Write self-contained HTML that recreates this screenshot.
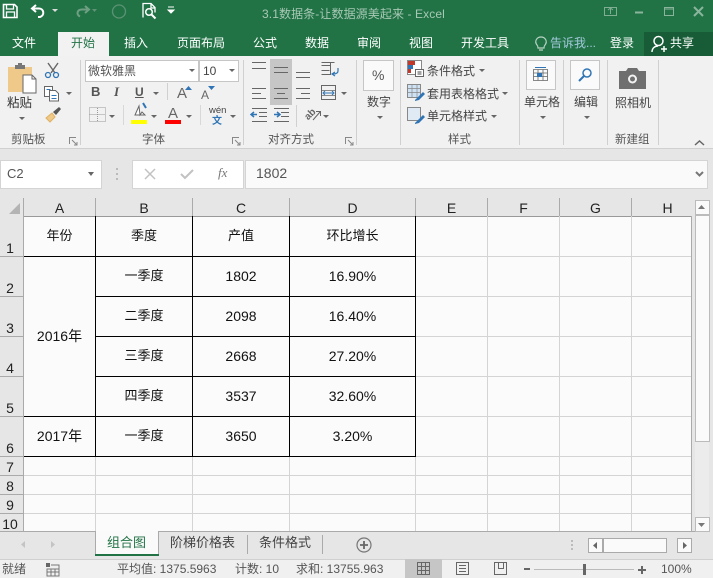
<!DOCTYPE html>
<html lang="zh"><head><meta charset="utf-8"><style>
html,body{margin:0;padding:0}
body{width:713px;height:578px;overflow:hidden;position:relative;background:#e6e6e6;font-family:"Liberation Sans","Noto Sans CJK SC",sans-serif;font-size:12px;color:#444}
div,span,svg{position:absolute}
.t{white-space:nowrap;line-height:16px}
.tab{color:#fff;top:35px;font-size:12px;white-space:nowrap;line-height:16px}
.a{width:0;height:0;border-left:3px solid transparent;border-right:3px solid transparent;border-top:3px solid #666}
.sep{width:1px;background:#d0d0d0;top:60px;height:85px}
.gl{background:#d4d4d4}
.v{top:216px;width:1px;height:315px}
.h{left:24px;width:667px;height:1px}
.b{background:#000}
.c{color:#111;font-size:13px;text-align:center;line-height:18px;white-space:nowrap}
.n{font-size:14px}
.ch{top:200px;color:#222;font-size:14px;text-align:center;line-height:17px}
.rh{left:0;width:20px;text-align:center;color:#222;font-size:14px;line-height:16px}
.hs{top:198px;width:1px;height:18px;background:#aaa}
.rs{left:0;width:23px;height:1px;background:#aaa}
svg{overflow:visible}
</style></head><body>
<div style="left:0;top:0;width:713px;height:56px;background:#217346"></div>
<div style="left:58px;top:32px;width:51px;height:24px;background:#f2f2f2"></div>
<div style="left:644px;top:32px;width:69px;height:24px;background:#185c37"></div>
<svg style="left:0;top:0" width="713" height="32" fill="none">
<path d="M3.500 4.500h11l2.500 2.500v10.500h-13.500z" stroke="#fff" stroke-width="1.600"/><path d="M6.500 5v4h7v-4M6.500 17v-5h8v5" stroke="#fff" stroke-width="1.300"/>
<path d="M36 5l-4 3.500 4 3.500" stroke="#fff" stroke-width="2"/><path d="M33 8.500h6c5 0 6 7 1 8.500h-2" stroke="#fff" stroke-width="2"/>
<path d="M52 9h6l-3 3z" fill="#ddd"/>
<path d="M85 6l4 3.500-4 3.500" stroke="#6f9f83" stroke-width="2"/><path d="M88 9.500h-6c-5 0-6 5-2 7" stroke="#6f9f83" stroke-width="2"/>
<path d="M92 9h5l-2.500 3z" fill="#5f9376"/>
<circle cx="119" cy="11.500" r="6.500" stroke="#5b9273" stroke-width="1.300"/>
<path d="M143 17.500v-14h8l4 4v5M151 4v4h4" stroke="#fff" stroke-width="1.300"/><circle cx="149" cy="12" r="3.300" stroke="#fff" stroke-width="1.500"/><path d="M151.500 14.500l4 4" stroke="#fff" stroke-width="2"/>
<path d="M168 7h6M168 10h6l-3 3z" stroke="#fff" fill="#fff"/>
<rect x="604.500" y="7.500" width="12" height="8" stroke="#7fae93"/><path d="M610.500 8v6M608 10l2.500-2 2.500 2" stroke="#7fae93"/>
<path d="M635 12.500h8" stroke="#8ab59c" stroke-width="2"/>
<rect x="664.500" y="7.500" width="9" height="8" stroke="#8ab59c"/><path d="M665 9h8" stroke="#8ab59c"/>
<path d="M694 7l9 9M703 7l-9 9" stroke="#8ab59c" stroke-width="2"/>
</svg>
<div class="t" style="left:262px;top:6px;color:#a8c8b5;font-size:12px;letter-spacing:.1px">3.1数据条-让数据源美起来 - Excel</div>
<div class="tab" style="left:12px">文件</div>
<div class="tab" style="left:71px;color:#217346">开始</div>
<div class="tab" style="left:124px">插入</div>
<div class="tab" style="left:177px">页面布局</div>
<div class="tab" style="left:253px">公式</div>
<div class="tab" style="left:305px">数据</div>
<div class="tab" style="left:357px">审阅</div>
<div class="tab" style="left:409px">视图</div>
<div class="tab" style="left:461px">开发工具</div>
<svg style="left:533px;top:35px" width="16" height="18" fill="none"><path d="M4 10c-3-4 0-8 4-8s7 4 4 8c-1 1-1 2-1 3h-6c0-1 0-2-1-3zM6 15h4" stroke="#b9d3c4" stroke-width="1.200"/></svg>
<div class="tab" style="left:550px;color:#a4c9dc">告诉我...</div>
<div class="tab" style="left:610px">登录</div>
<svg style="left:651px;top:35px" width="18" height="18" fill="none"><circle cx="7.500" cy="6" r="4.500" stroke="#fff" stroke-width="1.500"/><path d="M1 17c0-4 3-6 6-6M10 14h6M13 11v6" stroke="#fff" stroke-width="1.500"/></svg>
<div class="tab" style="left:670px">共享</div>

<div style="left:0;top:56px;width:713px;height:92px;background:#f1f1f1"></div>
<div style="left:0;top:148px;width:713px;height:1px;background:#d0d0d0"></div>
<div class="sep" style="left:80px"></div><div class="sep" style="left:243px"></div><div class="sep" style="left:356px"></div><div class="sep" style="left:400px"></div><div class="sep" style="left:519px"></div><div class="sep" style="left:563px"></div><div class="sep" style="left:607px"></div><div class="sep" style="left:658px"></div>

<svg style="left:0;top:56px" width="713" height="92" fill="none">
<path d="M8 11h24v25H8z" fill="#eec98a"/><rect x="15" y="9" width="10" height="4" fill="#777"/><rect x="18" y="7" width="4" height="3" fill="#777"/>
<path d="M23 19h9l4 4v14H23z" fill="#fff" stroke="#666"/><path d="M32 19v4h4" stroke="#666"/>
<path d="M48 7l7 10M58 7l-7 10" stroke="#666" stroke-width="1.400"/><circle cx="48" cy="19" r="2.500" stroke="#2f75b5" stroke-width="1.300"/><circle cx="56" cy="19" r="2.500" stroke="#2f75b5" stroke-width="1.300"/>
<path d="M44.500 30.500h8v10h-8z" fill="#fff" stroke="#666"/><path d="M49.500 34.500h6l3 3v7.500h-9z" fill="#fff" stroke="#666"/><path d="M51.500 39.500h5M51.500 42.500h5M46.500 33.500h4" stroke="#2f75b5"/>
<path d="M46 62l6-5 3 4-5 5z" fill="#eec98a" stroke="#e0b060"/><path d="M53 56l6-5 2 2-5 6z" fill="#555"/>
<path d="M89.500 51.500h16v14h-16zM89.500 58.500h16M97.500 52v14" stroke="#999" stroke-dasharray="1 1"/>
<path d="M139 50l-4 9h10l-3-3-2 3z" stroke="#666" fill="#fff"/><path d="M143 47l3 5" stroke="#2f75b5" stroke-width="2"/><rect x="131" y="64" width="16" height="4" fill="#ff0"/>
<rect x="165" y="64" width="16" height="4" fill="#f00"/>
</svg>
<div class="t" style="left:7px;top:95px;color:#333;font-size:12.500px">粘贴</div>
<div class="a" style="left:19px;top:117px"></div>
<div class="a" style="left:66px;top:92px"></div>
<div class="t" style="left:11px;top:132px;font-size:11.500px;color:#555">剪贴板</div>
<svg style="left:69px;top:137px" width="9" height="9" fill="none"><path d="M.5 7V.5H7M3 3l5 5M8 5v3H5" stroke="#888"/></svg>

<div style="left:85px;top:60px;width:112px;height:20px;background:#fff;border:1px solid #c6c6c6"></div>
<div style="left:199px;top:60px;width:38px;height:20px;background:#fff;border:1px solid #c6c6c6"></div>
<div class="t" style="left:88px;top:63px;font-size:12px;color:#555">微软雅黑</div>
<div class="a" style="left:189px;top:69px"></div>
<div class="t" style="left:203px;top:63px;font-size:12px;color:#444">10</div>
<div class="a" style="left:229px;top:69px"></div>
<div class="t" style="left:91px;top:84px;font-weight:bold;font-size:13px;color:#555">B</div>
<div class="t" style="left:114px;top:84px;font-style:italic;font-family:'Liberation Serif',serif;font-weight:bold;font-size:13px;color:#555">I</div>
<div class="t" style="left:135px;top:84px;font-weight:bold;font-size:12px;color:#555;text-decoration:underline">U</div>
<div class="a" style="left:153px;top:92px"></div>
<div style="left:167px;top:83px;width:1px;height:17px;background:#d0d0d0"></div>
<div class="t" style="left:177px;top:86px;font-size:15px;color:#666">A</div>
<svg style="left:185px;top:86px" width="8" height="5"><path d="M0 4l3.500-4 3.500 4z" fill="#2f75b5"/></svg>
<div class="t" style="left:201px;top:87px;font-size:12px;color:#666">A</div>
<svg style="left:208px;top:86px" width="8" height="5"><path d="M0 0l3.500 4 3.500-4z" fill="#2f75b5"/></svg>
<div class="a" style="left:109px;top:115px"></div>
<div class="a" style="left:151px;top:115px"></div>
<div class="t" style="left:168px;top:106px;font-size:15px;color:#666">A</div>
<div class="a" style="left:186px;top:115px"></div>
<div style="left:123px;top:105px;width:1px;height:20px;background:#d8d8d8"></div>
<div style="left:200px;top:105px;width:1px;height:20px;background:#d8d8d8"></div>
<div class="t" style="left:209px;top:103px;font-size:9.500px;color:#444">wén</div>
<div class="t" style="left:212px;top:114px;font-size:10px;font-weight:bold;color:#2f75b5">文</div>
<div class="a" style="left:230px;top:115px"></div>
<div class="t" style="left:142px;top:132px;font-size:11.500px;color:#555">字体</div>
<svg style="left:232px;top:137px" width="9" height="9" fill="none"><path d="M.5 7V.5H7M3 3l5 5M8 5v3H5" stroke="#888"/></svg>

<div style="left:270px;top:59px;width:22px;height:46px;background:#c6c6c6"></div>
<svg style="left:240px;top:56px" width="60" height="70" fill="none" stroke="#666">
<path d="M12 6.500h14M12 12.500h14"/>
<path d="M34 11.500h14M34 16.500h14"/>
<path d="M56 16.500h14M56 21.500h14"/>
<path d="M12 32.500h14M12 37.500h9M12 42.500h14"/>
<path d="M34 32.500h14M37 37.500h8M34 42.500h14"/>
<path d="M56 32.500h14M61 37.500h9M56 42.500h14"/>
<path d="M19 56.500h8M19 60.500h8M12 52.500h15M12 65.500h15"/>
<path d="M41 56.500h8M41 60.500h8M34 52.500h15M34 65.500h15"/>
<path d="M17 58.500h-5M14 56l-3 2.500 3 2.500M34 58.500h5M37 56l3 2.500-3 2.500" stroke="#2f75b5" stroke-width="1.500"/>
</svg>
<svg style="left:316px;top:60px" width="30" height="60" fill="none" stroke="#666">
<path d="M5.500 2.500h13M5.500 5.500h9M5.500 10.500h8M5.500 14.500h9v-12"/><path d="M22 8v3c0 2-2 3-5 3M19 12l-3 2 3 2" stroke="#2f75b5" stroke-width="1.200"/>
<rect x="5.500" y="25.500" width="14" height="14"/><path d="M6 30.500h13M6 35.500h13" stroke="#888"/><path d="M8 33h9M9 31l-2 2 2 2M16 31l2 2-2 2" stroke="#2f75b5"/>
</svg>
<div class="a" style="left:341px;top:92px"></div>
<span class="t" style="left:305px;top:107px;font-size:10px;font-weight:bold;color:#666;transform:rotate(-45deg)">ab</span>
<svg style="left:312px;top:109px" width="10" height="12" fill="none" stroke="#666"><path d="M1 11l7-8M4 2.500h4.500v4.500"/></svg>
<div class="a" style="left:323px;top:115px"></div>
<div style="left:296px;top:105px;width:1px;height:22px;background:#d0d0d0"></div>
<div class="t" style="left:268px;top:132px;font-size:11.500px;color:#555">对齐方式</div>
<svg style="left:345px;top:137px" width="9" height="9" fill="none"><path d="M.5 7V.5H7M3 3l5 5M8 5v3H5" stroke="#888"/></svg>

<div style="left:363px;top:60px;width:29px;height:29px;background:#fafafa;border:1px solid #c6c6c6"></div>
<div class="t" style="left:372px;top:67px;font-size:14px;color:#555">%</div>
<div class="t" style="left:367px;top:94px;color:#444">数字</div>
<div class="a" style="left:377px;top:116px"></div>

<svg style="left:407px;top:60px" width="20" height="66" fill="none">
<rect x=".500" y=".500" width="14" height="14" fill="#fff" stroke="#888"/><rect x="1" y="1" width="7" height="4" fill="#c0392b"/><rect x="1" y="5" width="5" height="4" fill="#2f75b5"/><rect x="1" y="9" width="3" height="4" fill="#c0392b"/><rect x="8.500" y="9.500" width="8" height="7" fill="#fff" stroke="#666"/><path d="M10.500 12h4M10.500 14h4" stroke="#444"/>
<rect x=".500" y="24.500" width="13" height="13" fill="#cfe2f3" stroke="#888"/><path d="M1 28.500h13M1 32.500h13M5 25v12M10 25v12" stroke="#888" stroke-width=".7"/><path d="M8 40l5-5 3-3 2 2-6 6-4 1z" fill="#2f75b5"/>
<rect x=".500" y="47.500" width="13" height="13" fill="#dfeaf5" stroke="#888"/><path d="M8 63l5-5 3-3 2 2-6 6-4 1z" fill="#2f75b5"/>
</svg>
<div class="t" style="left:427px;top:63px;color:#444">条件格式</div><div class="a" style="left:479px;top:69px"></div>
<div class="t" style="left:427px;top:86px;color:#444">套用表格格式</div><div class="a" style="left:502px;top:92px"></div>
<div class="t" style="left:427px;top:108px;color:#444">单元格样式</div><div class="a" style="left:491px;top:115px"></div>
<div class="t" style="left:448px;top:132px;font-size:11.500px;color:#555">样式</div>

<div style="left:526px;top:60px;width:28px;height:28px;background:#fafafa;border:1px solid #c6c6c6"></div>
<svg style="left:533px;top:66px" width="16" height="16" fill="none" stroke="#666"><path d="M.5 3.500h14v11H.5zM.5 7h14M.5 10.500h14M5 3.500v11M10 3.500v11" stroke-width=".8"/><rect x="4" y="7" width="5" height="4" fill="#2f75b5" stroke="none"/><path d="M2 1.500h11" stroke="#2f75b5"/></svg>
<div class="t" style="left:524px;top:94px;color:#444">单元格</div><div class="a" style="left:540px;top:116px"></div>

<div style="left:570px;top:60px;width:28px;height:28px;background:#fafafa;border:1px solid #c6c6c6"></div>
<svg style="left:578px;top:67px" width="16" height="16" fill="none"><circle cx="9" cy="6" r="4" stroke="#2f75b5" stroke-width="1.500"/><path d="M6 9l-5 5" stroke="#2f75b5" stroke-width="2"/></svg>
<div class="t" style="left:574px;top:94px;color:#444">编辑</div><div class="a" style="left:584px;top:116px"></div>

<svg style="left:618px;top:66px" width="30" height="24"><path d="M1 5h7l2-3h9l2 3h7v18H1z" fill="#6f6f6f"/><circle cx="14.500" cy="13" r="4.500" fill="#f2f2f2"/><circle cx="14.500" cy="13" r="2.500" fill="#6f6f6f"/></svg>
<div class="t" style="left:615px;top:95px;color:#444">照相机</div>
<div class="t" style="left:615px;top:132px;font-size:11.500px;color:#555">新建组</div>
<svg style="left:694px;top:139px" width="12" height="7" fill="none"><path d="M1 6l4.500-4 4.500 4" stroke="#666" stroke-width="1.500"/></svg>

<div style="left:0;top:160px;width:100px;height:27px;background:#fff;border:1px solid #d4d4d4"></div>
<div class="t" style="left:7px;top:166px;font-size:13px;color:#555">C2</div>
<div class="a" style="left:88px;top:172px;border-left-width:3.500px;border-right-width:3.500px;border-top-width:4px"></div>
<div style="left:116px;top:168px;width:2px;height:2px;background:#bbb;box-shadow:0 5px #bbb,0 10px #bbb"></div>
<div style="left:132px;top:160px;width:110px;height:27px;background:#fff;border:1px solid #d4d4d4"></div>
<svg style="left:144px;top:167px" width="50" height="14" fill="none"><path d="M1 2l10 10M11 2L1 12" stroke="#c2c2c2" stroke-width="1.500"/><path d="M37 7l4 4 8-8" stroke="#c2c2c2" stroke-width="2"/></svg>
<div class="t" style="left:218px;top:165px;font-family:'Liberation Serif',serif;font-style:italic;font-size:13px;color:#777">fx</div>
<div style="left:245px;top:160px;width:461px;height:27px;background:#fafafa;border:1px solid #d4d4d4"></div>
<div class="t" style="left:256px;top:165px;font-size:14px;color:#555">1802</div>
<svg style="left:695px;top:171px" width="10" height="7" fill="none"><path d="M1 1l3.500 3.500L8 1" stroke="#777" stroke-width="2"/></svg>

<div style="left:24px;top:216px;width:667px;height:315px;background:#fbfbfb"></div>
<svg style="left:9px;top:203px" width="12" height="12"><path d="M11 0v11H0z" fill="#b4b4b4"/></svg>
<div class="hs" style="left:23px"></div><div class="hs" style="left:95px"></div><div class="hs" style="left:192px"></div><div class="hs" style="left:289px"></div><div class="hs" style="left:415px"></div><div class="hs" style="left:487px"></div><div class="hs" style="left:559px"></div><div class="hs" style="left:631px"></div>
<div style="left:23px;top:216px;width:669px;height:1px;background:#999"></div>
<div class="ch" style="left:24px;width:71px">A</div><div class="ch" style="left:96px;width:96px">B</div><div class="ch" style="left:193px;width:96px">C</div><div class="ch" style="left:290px;width:125px">D</div><div class="ch" style="left:416px;width:71px">E</div><div class="ch" style="left:488px;width:71px">F</div><div class="ch" style="left:560px;width:71px">G</div><div class="ch" style="left:632px;width:71px">H</div>
<div style="left:23px;top:198px;width:1px;height:333px;background:#aaa"></div>
<div style="left:691px;top:216px;width:1px;height:315px;background:#aaa"></div>
<div class="rs" style="top:256px"></div><div class="rs" style="top:296px"></div><div class="rs" style="top:336px"></div><div class="rs" style="top:376px"></div><div class="rs" style="top:416px"></div><div class="rs" style="top:456px"></div><div class="rs" style="top:475px"></div><div class="rs" style="top:494px"></div><div class="rs" style="top:513px"></div>
<div class="rh" style="top:240px">1</div><div class="rh" style="top:280px">2</div><div class="rh" style="top:320px">3</div><div class="rh" style="top:360px">4</div><div class="rh" style="top:400px">5</div><div class="rh" style="top:440px">6</div><div class="rh" style="top:459px">7</div><div class="rh" style="top:478px">8</div><div class="rh" style="top:497px">9</div><div class="rh" style="top:516px">10</div>

<div class="gl v" style="left:487px"></div><div class="gl v" style="left:559px"></div><div class="gl v" style="left:631px"></div>
<div class="gl v" style="left:95px;top:456px;height:75px"></div><div class="gl v" style="left:192px;top:456px;height:75px"></div><div class="gl v" style="left:289px;top:456px;height:75px"></div><div class="gl v" style="left:415px;top:456px;height:75px"></div>
<div class="gl h" style="left:416px;width:275px;top:256px"></div><div class="gl h" style="left:416px;width:275px;top:296px"></div><div class="gl h" style="left:416px;width:275px;top:336px"></div><div class="gl h" style="left:416px;width:275px;top:376px"></div><div class="gl h" style="left:416px;width:275px;top:416px"></div><div class="gl h" style="left:416px;width:275px;top:456px"></div>
<div class="gl h" style="top:475px"></div><div class="gl h" style="top:494px"></div><div class="gl h" style="top:513px"></div>
<div class="b" style="left:95px;top:216px;width:1px;height:241px"></div>
<div class="b" style="left:192px;top:216px;width:1px;height:241px"></div>
<div class="b" style="left:289px;top:216px;width:1px;height:241px"></div>
<div class="b" style="left:415px;top:216px;width:1px;height:241px"></div>
<div class="b" style="left:24px;top:256px;width:392px;height:1px"></div>
<div class="b" style="left:95px;top:296px;width:321px;height:1px"></div>
<div class="b" style="left:95px;top:336px;width:321px;height:1px"></div>
<div class="b" style="left:95px;top:376px;width:321px;height:1px"></div>
<div class="b" style="left:24px;top:416px;width:392px;height:1px"></div>
<div class="b" style="left:24px;top:456px;width:392px;height:1px"></div>

<div class="c" style="left:24px;width:71px;top:227px">年份</div><div class="c" style="left:96px;width:96px;top:227px">季度</div><div class="c" style="left:193px;width:96px;top:227px">产值</div><div class="c" style="left:290px;width:125px;top:227px">环比增长</div>
<div class="c n" style="left:24px;width:71px;top:327px">2016年</div>
<div class="c" style="left:96px;width:96px;top:267px">一季度</div><div class="c n" style="left:193px;width:96px;top:267px">1802</div><div class="c n" style="left:290px;width:125px;top:267px">16.90%</div>
<div class="c" style="left:96px;width:96px;top:307px">二季度</div><div class="c n" style="left:193px;width:96px;top:307px">2098</div><div class="c n" style="left:290px;width:125px;top:307px">16.40%</div>
<div class="c" style="left:96px;width:96px;top:347px">三季度</div><div class="c n" style="left:193px;width:96px;top:347px">2668</div><div class="c n" style="left:290px;width:125px;top:347px">27.20%</div>
<div class="c" style="left:96px;width:96px;top:387px">四季度</div><div class="c n" style="left:193px;width:96px;top:387px">3537</div><div class="c n" style="left:290px;width:125px;top:387px">32.60%</div>
<div class="c n" style="left:24px;width:71px;top:427px">2017年</div><div class="c" style="left:96px;width:96px;top:427px">一季度</div><div class="c n" style="left:193px;width:96px;top:427px">3650</div><div class="c n" style="left:290px;width:125px;top:427px">3.20%</div>

<div style="left:695px;top:200px;width:14px;height:331px;background:#ececec"></div>
<div style="left:695px;top:200px;width:13px;height:13px;background:#fafafa;border:1px solid #bbb"></div>
<svg style="left:698px;top:205px" width="8" height="5"><path d="M0 4l3.500-4 3.500 4z" fill="#777"/></svg>
<div style="left:695px;top:215px;width:13px;height:225px;background:#fafafa;border:1px solid #bbb"></div>
<div style="left:695px;top:517px;width:13px;height:13px;background:#fafafa;border:1px solid #bbb"></div>
<svg style="left:698px;top:523px" width="8" height="5"><path d="M0 0l3.500 4 3.500-4z" fill="#777"/></svg>

<div style="left:0;top:531px;width:695px;height:1px;background:#aaa"></div>
<svg style="left:20px;top:541px" width="40" height="8"><path d="M5 0v7L1 3.500z" fill="#c4c4c4"/><path d="M31 0v7l4-3.500z" fill="#c4c4c4"/></svg>
<div style="left:95px;top:531px;width:64px;height:25px;background:#fafafa;border-left:1px solid #aaa;border-right:1px solid #aaa;box-sizing:border-box"></div>
<div style="left:95px;top:554px;width:64px;height:2px;background:#217346"></div>
<div class="t" style="left:107px;top:535px;font-size:13px;color:#217346">组合图</div>
<div class="t" style="left:170px;top:535px;font-size:13px;color:#444">阶梯价格表</div>
<div style="left:247px;top:535px;width:1px;height:19px;background:#aaa"></div>
<div class="t" style="left:259px;top:535px;font-size:13px;color:#444">条件格式</div>
<div style="left:322px;top:535px;width:1px;height:19px;background:#aaa"></div>
<svg style="left:356px;top:537px" width="16" height="16" fill="none"><circle cx="8" cy="8" r="7" stroke="#777" stroke-width="1.200"/><path d="M4 8h8M8 4v8" stroke="#666" stroke-width="1.800"/></svg>
<div style="left:571px;top:540px;width:2px;height:2px;background:#bbb;box-shadow:0 4px #bbb,0 8px #bbb"></div>
<div style="left:588px;top:538px;width:13px;height:13px;background:#fafafa;border:1px solid #aaa"></div>
<svg style="left:592px;top:542px" width="6" height="8"><path d="M5 0v7L1 3.500z" fill="#666"/></svg>
<div style="left:603px;top:538px;width:62px;height:13px;background:#fafafa;border:1px solid #aaa"></div>
<div style="left:677px;top:538px;width:13px;height:13px;background:#fafafa;border:1px solid #aaa"></div>
<svg style="left:683px;top:542px" width="6" height="8"><path d="M0 0v7l4-3.500z" fill="#666"/></svg>

<div style="left:0;top:559px;width:713px;height:19px;background:#f0f0f0;border-top:1px solid #d0d0d0;box-sizing:border-box"></div>
<div class="t" style="left:2px;top:561px;color:#555">就绪</div>
<svg style="left:46px;top:563px" width="14" height="13"><rect x="0" y="0" width="4" height="4" fill="#666"/><path d="M5 2h8v11H1V6h12M1 9h12M5 6v7M9 6v7" stroke="#777" fill="none"/></svg>
<div class="t" style="left:117px;top:561px;color:#555">平均值: 1375.5963</div>
<div class="t" style="left:235px;top:561px;color:#555">计数: 10</div>
<div class="t" style="left:296px;top:561px;color:#555">求和: 13755.963</div>
<div style="left:405px;top:559px;width:37px;height:19px;background:#c6c6c6"></div>
<svg style="left:417px;top:562px" width="110" height="15" fill="none" stroke="#666">
<path d="M.5 .5h12v12H.5zM.5 4.500h12M.5 8.500h12M4.500 .5v12M8.500 .5v12"/>
<path d="M39.500 .5h12v12h-12zM42 3.500h7M42 6.500h7M42 9.500h7"/>
<path d="M77.500 .5h12v12h-12zM81.500 .5v6h5v-6"/>
</svg>
<div style="left:524px;top:568px;width:6px;height:2px;background:#666"></div>
<div style="left:534px;top:569px;width:100px;height:1px;background:#bbb"></div>
<div style="left:583px;top:564px;width:3px;height:11px;background:#666"></div>
<div style="left:638px;top:569px;width:8px;height:2px;background:#666"></div>
<div style="left:641px;top:566px;width:2px;height:8px;background:#666"></div>
<div class="t" style="left:661px;top:561px;color:#555">100%</div>
</body></html>
